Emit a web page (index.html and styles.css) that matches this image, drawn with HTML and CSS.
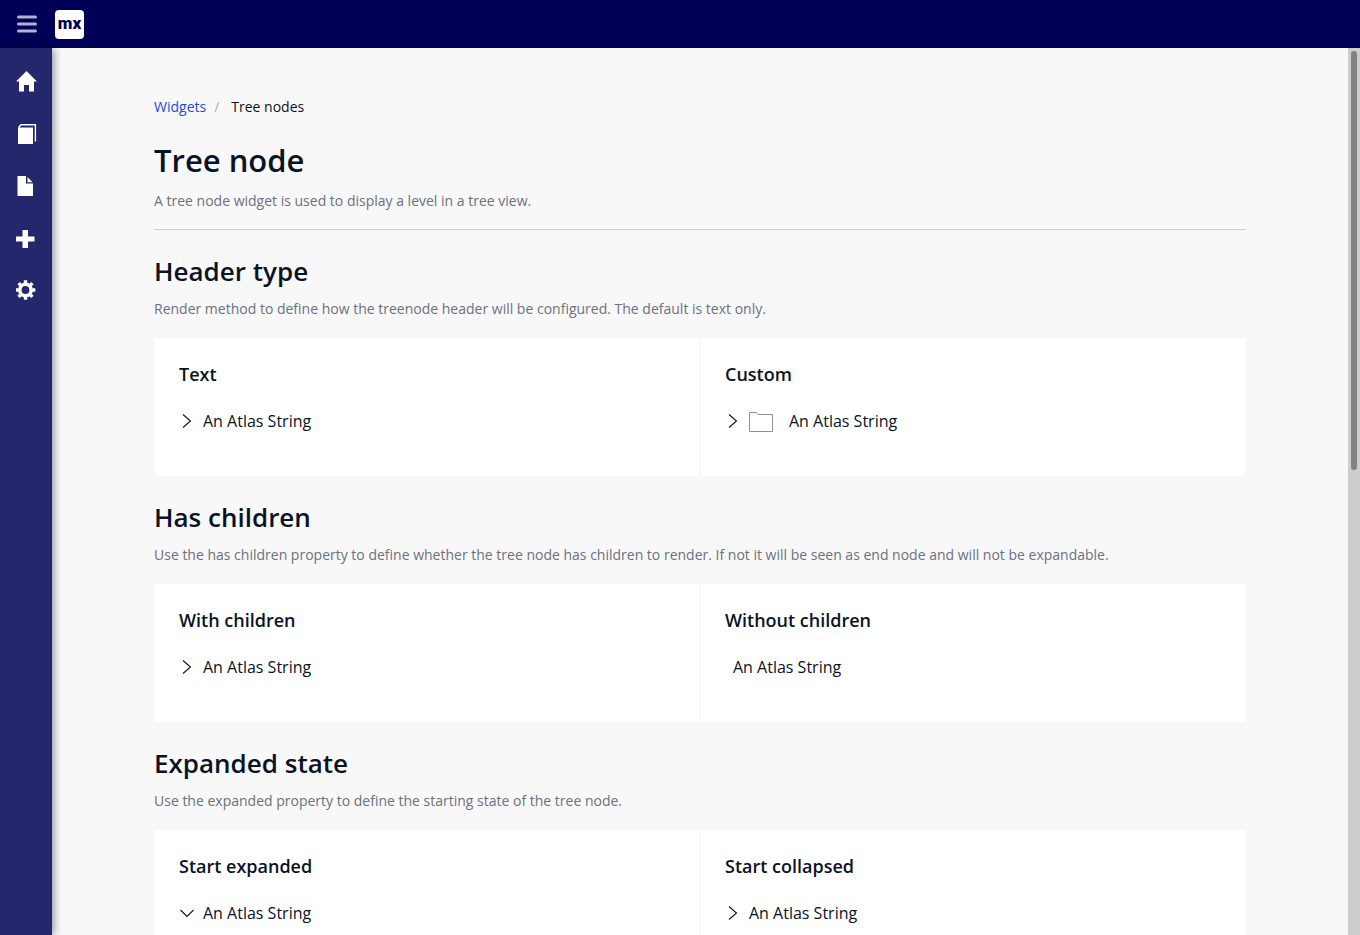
FILE: index.html
```html
<!DOCTYPE html>
<html lang="en">
<head>
<meta charset="utf-8">
<meta name="viewport" content="width=device-width, initial-scale=1">
<title>Tree nodes</title>
<link rel="stylesheet" href="styles.css">
</head>
<body>
<svg class="defs" aria-hidden="true">
  <symbol id="chevron" viewBox="0 0 16 16"><path d="M4 1.500l7.500 6.500L4 14.500" fill="none" stroke="#0a1325" stroke-width="1.100"/></symbol>
  <symbol id="chevron-down" viewBox="0 0 16 16"><path d="M1.500 5L8 11.500 14.500 5" fill="none" stroke="#0a1325" stroke-width="1.100"/></symbol>
</svg>
<header class="topbar">
  <button class="menu-toggle" type="button" aria-label="Toggle menu">
    <svg width="20" height="18" viewBox="0 0 20 18"><path d="M1.500 2h17M1.500 9h17M1.500 16h17" stroke="#b2b2cd" stroke-width="3" stroke-linecap="round"/></svg>
  </button>
  <a class="logo" href="#" aria-label="mx">mx</a>
</header>
<div class="shell">
  <nav class="sidebar" aria-label="Main">
    <a href="#" aria-label="Home"><svg width="22" height="22" viewBox="0 0 22 22"><path d="M10.500 0L0 10.500H3V20.500H8V14H13V20.500H18V10.500H21z" fill="#fff"/></svg></a>
    <a href="#" aria-label="Pages"><svg width="22" height="22" viewBox="0 0 22 22"><path d="M2 4.500H17V21H2z" fill="#fff"/><path d="M2.500 4.500L5 1.800H19.400V18.500" fill="none" stroke="#fff" stroke-width="1.400"/></svg></a>
    <a href="#" aria-label="Document"><svg width="22" height="22" viewBox="0 0 22 22"><path d="M1.500 1H10V8.500H17V21H1.500zM11.500 2L16.500 7.200H11.500z" fill="#fff"/></svg></a>
    <a href="#" aria-label="Add"><svg width="22" height="22" viewBox="0 0 22 22"><path d="M6.500 3h5.500v6.500h6.500v5h-6.500v6.500H6.500v-6.500H0v-5h6.500z" fill="#fff"/></svg></a>
    <a href="#" aria-label="Settings"><svg width="22" height="22" viewBox="0 0 22 22"><g fill="none" stroke="#fff"><circle cx="9.500" cy="11" r="5.700" stroke-width="3.600"/><path d="M9.500 1.200v3M9.500 17.800v3M-.3 11h3M16.300 11h3M2.600 4.100l2.100 2.100M14.300 15.800l2.100 2.100M2.600 17.900l2.100-2.100M14.300 6.200l2.100-2.100" stroke-width="3.400"/></g></svg></a>
  </nav>
  <main class="content">
    <div class="container">
      <nav class="breadcrumb" aria-label="Breadcrumb"><a href="#">Widgets</a><span class="separator">/</span><span>Tree nodes</span></nav>
      <header class="page-header">
        <h1>Tree node</h1>
        <p class="description">A tree node widget is used to display a level in a tree view.</p>
      </header>
      <section>
        <h2>Header type</h2>
        <p class="description">Render method to define how the treenode header will be configured. The default is text only.</p>
        <div class="cards">
          <article class="card"><h3>Text</h3><button class="node" type="button"><svg class="arrow"><use href="#chevron"/></svg>An Atlas String</button></article>
          <article class="card"><h3>Custom</h3><button class="node" type="button"><svg class="arrow"><use href="#chevron"/></svg><svg class="folder" viewBox="0 0 24 24"><path d="M.5 22.500V3.500H7.500L9 5.500H23.500V22.500z" fill="none" stroke="#8b909c"/></svg>An Atlas String</button></article>
        </div>
      </section>
      <section>
        <h2>Has children</h2>
        <p class="description">Use the has children property to define whether the tree node has children to render. If not it will be seen as end node and will not be expandable.</p>
        <div class="cards">
          <article class="card"><h3>With children</h3><button class="node" type="button"><svg class="arrow"><use href="#chevron"/></svg>An Atlas String</button></article>
          <article class="card"><h3>Without children</h3><div class="node leaf">An Atlas String</div></article>
        </div>
      </section>
      <section>
        <h2>Expanded state</h2>
        <p class="description">Use the expanded property to define the starting state of the tree node.</p>
        <div class="cards">
          <article class="card"><h3>Start expanded</h3><button class="node" type="button" aria-expanded="true"><svg class="arrow"><use href="#chevron-down"/></svg>An Atlas String</button></article>
          <article class="card"><h3>Start collapsed</h3><button class="node" type="button" aria-expanded="false"><svg class="arrow"><use href="#chevron"/></svg>An Atlas String</button></article>
        </div>
      </section>
    </div>
  </main>
  <div class="scroll-track" aria-hidden="true"><div class="scroll-thumb"></div></div>
</div>
</body>
</html>
```
FILE: styles.css
```css
* { box-sizing: border-box; }
body {
  margin: 0;
  height: 100vh;
  display: flex;
  flex-direction: column;
  overflow: hidden;
  background: #f8f8f8;
  color: #0a1325;
  font: 14px/22px "Open Sans", sans-serif;
}
h1, h2, h3, p { margin: 0; font-weight: 600; }
button { border: 0; padding: 0; background: none; font: inherit; color: inherit; cursor: pointer; }
svg { display: block; flex: none; }
.defs { display: none; }

.topbar {
  flex: none;
  height: 48px;
  display: flex;
  align-items: center;
  gap: 18px;
  padding-left: 17px;
  background: #000057;
}
.logo {
  width: 29px;
  height: 29px;
  display: flex;
  justify-content: center;
  border-radius: 4px;
  background: #fff;
  color: #000057;
  font: 900 17px/26px Roboto, sans-serif;
  text-decoration: none;
}

.shell { flex: 1; display: flex; min-height: 0; }
.sidebar {
  flex: none;
  width: 52px;
  display: flex;
  flex-direction: column;
  gap: 30px;
  padding: 23px 0 0 16px;
  background: #24276c;
  box-shadow: 2px 0 8px rgba(0, 0, 0, 0.4);
  z-index: 1;
}
.content { flex: 1; min-width: 0; overflow: auto; scrollbar-width: none; }
.container { max-width: 1140px; margin: 0 auto; padding: 48px 24px; }
.scroll-track { flex: none; width: 12px; padding: 3px; background: #cdcdcd; }
.scroll-thumb { height: 47.6%; border-radius: 3px; background: #7e8282; }

.breadcrumb { display: flex; }
.breadcrumb a { color: #264ae5; text-decoration: none; }
.separator { margin: 0 12px 0 8px; color: #a9acb3; }

.page-header { margin-bottom: 24px; padding: 20px 0 17px; border-bottom: 1px solid #ced0d3; }
h1 { margin-bottom: 8px; font-size: 31px; line-height: 44px; }
h2 { margin-bottom: 10px; font-size: 26px; line-height: 34px; }
h3 { margin-bottom: 16px; font-size: 18px; line-height: 24px; }
.description { color: #6c717e; font-weight: 400; }

section { margin-bottom: 24px; }
.cards {
  display: grid;
  grid-template-columns: 1fr 1fr;
  gap: 2px;
  margin-top: 18px;
  padding: 0 1px;
}
.card { min-height: 138px; padding: 24px; background: #fff; }
.node { display: flex; align-items: center; height: 38px; font-size: 16px; line-height: 24px; }
.leaf { padding-left: 8px; }
.arrow { width: 16px; height: 16px; margin-right: 8px; }
.folder { width: 24px; height: 24px; margin-right: 16px; }
```
